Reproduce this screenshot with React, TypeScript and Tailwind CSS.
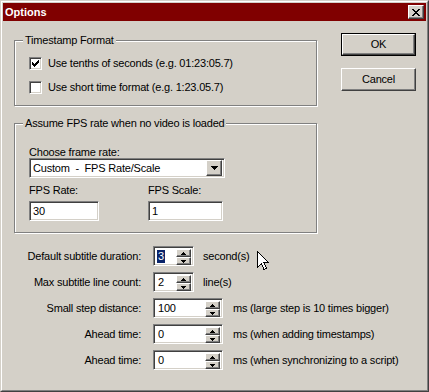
import React from "react";

const sunken =
  "border border-t-[#808080] border-l-[#808080] border-b-white border-r-white shadow-[inset_1px_1px_0_#404040,inset_-1px_-1px_0_#d4d0c8] bg-white";
const raised =
  "border border-t-white border-l-white border-b-[#404040] border-r-[#404040] shadow-[inset_-1px_-1px_0_#808080] bg-[#d4d0c8]";

function CloseX() {
  return (
    <svg width="8" height="7" viewBox="0 0 8 7" shapeRendering="crispEdges">
      <path
        d="M0 0h2v1h1v1h2V1h1V0h2v1H7v1H6v1H5v1h1v1h1v1h1v1H6V6H5V5H3v1H2v1H0V6h1V5h1V4h1V3H2V2H1V1H0z"
        fill="#000"
      />
    </svg>
  );
}

function DownTri() {
  return (
    <svg width="7" height="4" viewBox="0 0 7 4" shapeRendering="crispEdges">
      <path d="M0 0h7v1H6v1H5v1H4v1H3V3H2V2H1V1H0z" fill="#000" />
    </svg>
  );
}

function SmallTri({ up }: { up?: boolean }) {
  return (
    <svg width="5" height="3" viewBox="0 0 5 3" shapeRendering="crispEdges" className={up ? "rotate-180" : ""}>
      <path d="M0 0h5v1H4v1H3v1H2V2H1V1H0z" fill="#000" />
    </svg>
  );
}

function Check() {
  return (
    <svg width="7" height="7" viewBox="0 0 7 7" shapeRendering="crispEdges">
      <path
        d="M6 0h1v3H6v1H5v1H4v1H3v1H2V6H1V5H0V2h1v1h1v1h1V3h1V2h1V1h1z"
        fill="#000"
      />
    </svg>
  );
}

function Checkbox({ checked, label }: { checked?: boolean; label: string }) {
  return (
    <div className="flex items-center h-[13px]">
      <div className={`${sunken} w-[13px] h-[13px] flex items-center justify-center`}>
        {checked && <Check />}
      </div>
      <span className="ml-[6px] leading-[13px]">{label}</span>
    </div>
  );
}

function GroupBox({
  title,
  className,
  children,
}: {
  title: string;
  className: string;
  children?: React.ReactNode;
}) {
  return (
    <div
      className={`relative border border-[#808080] shadow-[inset_1px_1px_0_#fff,1px_1px_0_#fff] ${className}`}
    >
      <span className="absolute left-[8px] top-[-7px] px-[2px] bg-[#d4d0c8] leading-[13px]">{title}</span>
      {children}
    </div>
  );
}

function Spin({ value, width, selected }: { value: string; width: string; selected?: boolean }) {
  return (
    <div className={`${sunken} ${width} h-[20px] flex p-[2px]`}>
      <div className="flex-1 flex items-center pl-[1px] leading-[13px]">
        {selected ? <span className="bg-[#0a246a] text-white px-[1px]">{value}</span> : <span className="pl-[1px]">{value}</span>}
      </div>
      <div className="flex flex-col w-[15px] h-[16px]">
        <div className={`${raised} flex-1 flex items-center justify-center`}>
          <SmallTri up />
        </div>
        <div className={`${raised} flex-1 flex items-center justify-center`}>
          <SmallTri />
        </div>
      </div>
    </div>
  );
}

function SpinRow({
  label,
  value,
  width,
  unit,
  selected,
  unitGap,
}: {
  label: string;
  value: string;
  width: string;
  unit: string;
  selected?: boolean;
  unitGap: string;
}) {
  return (
    <div className="flex items-center h-[20px]">
      <div className="w-[138px] text-right leading-[13px]">{label}</div>
      <div className="ml-[12px]">
        <Spin value={value} width={width} selected={selected} />
      </div>
      <span className={`${unitGap} leading-[13px]`}>{unit}</span>
    </div>
  );
}

function Button({ label, isDefault }: { label: string; isDefault?: boolean }) {
  if (isDefault) {
    return (
      <div className="w-[75px] h-[23px] border border-black">
        <div className={`${raised} w-full h-full flex items-center justify-center`}>{label}</div>
      </div>
    );
  }
  return <div className={`${raised} w-[75px] h-[23px] flex items-center justify-center`}>{label}</div>;
}

export default function App() {
  return (
    <div className="w-[429px] h-[392px] relative bg-[#d4d0c8] border border-t-[#d4d0c8] border-l-[#d4d0c8] border-b-[#404040] border-r-[#404040] font-['Liberation_Sans',Arial,sans-serif] text-[11px] tracking-[-0.2px] text-black select-none">
      <div className="h-full border border-t-white border-l-white border-b-[#808080] border-r-[#808080] p-px flex flex-col">
        {/* Title bar */}
        <div className="h-[18px] bg-[#800000] flex items-center justify-between pl-[2px] pr-[2px]">
          <span className="font-bold text-white text-[11px] leading-[13px] tracking-normal">Options</span>
          <div className={`${raised} w-[16px] h-[14px] flex items-center justify-center`}>
            <CloseX />
          </div>
        </div>

        {/* Body */}
        <div className="flex flex-col flex-1">
          <div className="flex pl-[11px] pt-[19px]">
            <div className="flex flex-col w-[303px]">
              <GroupBox title="Timestamp Format" className="h-[66px]">
                <div className="flex flex-col gap-[11px] pl-[14px] pt-[16px]">
                  <Checkbox checked label="Use tenths of seconds (e.g. 01:23:05.7)" />
                  <Checkbox label="Use short time format (e.g. 1:23.05.7)" />
                </div>
              </GroupBox>
              <GroupBox title="Assume FPS rate when no video is loaded" className="mt-[17px] h-[110px]">
                <div className="flex flex-col pl-[14px] pt-[22px]">
                  <div className="leading-[13px] h-[13px]">Choose frame rate:</div>
                  <div className={`${sunken} w-[196px] h-[20px] mt-[-1px] flex items-center p-[2px]`}>
                    <span className="flex-1 pl-[1px] leading-[13px]">Custom&nbsp; -&nbsp; FPS Rate/Scale</span>
                    <div className={`${raised} w-[16px] h-[16px] flex items-center justify-center`}>
                      <DownTri />
                    </div>
                  </div>
                  <div className="flex mt-[6px]">
                    <div className="flex flex-col w-[119px]">
                      <div className="leading-[13px] h-[13px]">FPS Rate:</div>
                      <div className={`${sunken} w-[70px] h-[20px] mt-[4px] flex items-center pl-[3px] leading-[13px]`}>30</div>
                    </div>
                    <div className="flex flex-col">
                      <div className="leading-[13px] h-[13px]">FPS Scale:</div>
                      <div className={`${sunken} w-[75px] h-[20px] mt-[4px] flex items-center pl-[3px] leading-[13px]`}>1</div>
                    </div>
                  </div>
                </div>
              </GroupBox>
            </div>
            <div className="ml-[24px] mt-[-7px] flex flex-col gap-[12px]">
              <Button label="OK" isDefault />
              <Button label="Cancel" />
            </div>
          </div>

          <div className="flex flex-col gap-[6px] mt-[13px]">
            <SpinRow label="Default subtitle duration:" value="3" width="w-[41px]" unit="second(s)" selected unitGap="ml-[9px]" />
            <SpinRow label="Max subtitle line count:" value="2" width="w-[41px]" unit="line(s)" unitGap="ml-[9px]" />
            <SpinRow label="Small step distance:" value="100" width="w-[70px]" unit="ms (large step is 10 times bigger)" unitGap="ml-[10px]" />
            <SpinRow label="Ahead time:" value="0" width="w-[70px]" unit="ms (when adding timestamps)" unitGap="ml-[10px]" />
            <SpinRow label="Ahead time:" value="0" width="w-[70px]" unit="ms (when synchronizing to a script)" unitGap="ml-[10px]" />
          </div>
        </div>
      </div>

      {/* Mouse cursor */}
      <svg
        className="absolute left-[256px] top-[250px]"
        width="12"
        height="20"
        viewBox="0 0 12 20"
        shapeRendering="crispEdges"
      >
        <path d="M0.5 0.5 V16.5 L4.5 12.5 L7 18.5 L9.5 17.5 L7 11.5 H11.5 Z" fill="#fff" stroke="#000" strokeWidth="1" />
      </svg>
    </div>
  );
}
